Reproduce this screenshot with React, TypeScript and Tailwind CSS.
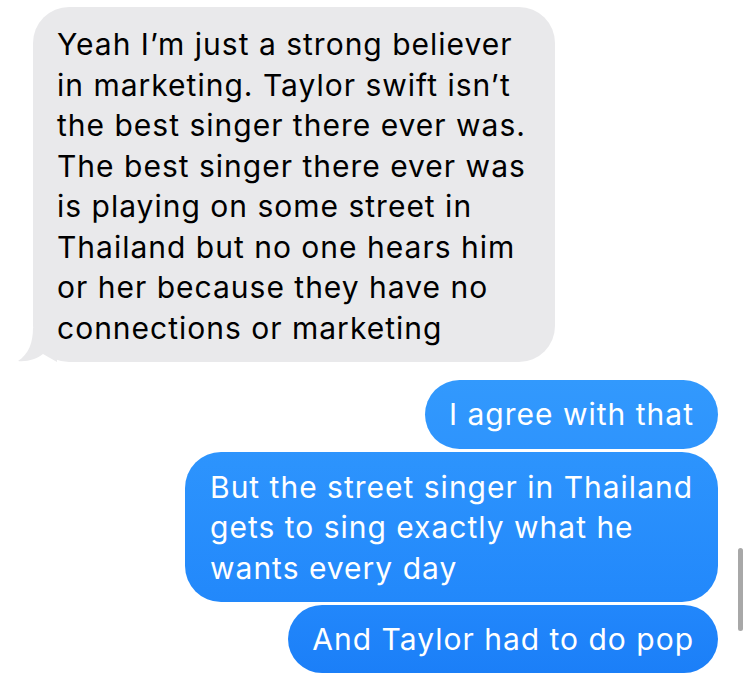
const grayLines = [
  'Yeah I’m just a strong believer',
  'in marketing. Taylor swift isn’t',
  'the best singer there ever was.',
  'The best singer there ever was',
  'is playing on some street in',
  'Thailand but no one hears him',
  'or her because they have no',
  'connections or marketing',
];

const streetLines = ['But the street singer in Thailand', 'gets to sing exactly what he', 'wants every day'];

export default function App() {
  return (
    <div className="relative w-[750px] h-[676px] bg-white overflow-hidden font-['Inter','Noto_Sans',sans-serif] text-[30px] leading-[40.5px] tracking-[1px]">
      <div className="flex flex-col pt-[7px]">
        {/* Received */}
        <div className="relative ml-[33px] w-[522px] rounded-[36px] bg-[#e9e9eb] pl-[24px] pt-[17px] pb-[14px] text-black">
          {grayLines.map((l, i) => (
            <div key={i} className="whitespace-nowrap">{l}</div>
          ))}
          <svg className="absolute left-[-16px] bottom-0" width="40" height="34" viewBox="0 0 40 34">
            <path d="M16 0 C16 14 12 26 1 33 C10 34 20 31 26 26 L40 34 L40 0 Z" fill="#e9e9eb" />
          </svg>
        </div>

        {/* Sent */}
        <div className="mt-[18px] mr-[32px] flex flex-col items-end gap-[3px] text-white">
          <div className="rounded-[35px] bg-gradient-to-b from-[#3299fd] to-[#2e94fd] pl-[24px] pr-[24px] pt-[14px] pb-[14px] whitespace-nowrap">
            I agree with that
          </div>
          <div className="w-[533px] rounded-[36px] bg-gradient-to-b from-[#2d94fd] to-[#2288fb] pl-[25px] pt-[15px] pb-[14px]">
            {streetLines.map((l, i) => (
              <div key={i} className="whitespace-nowrap">{l}</div>
            ))}
          </div>
          <div className="rounded-[35px] bg-gradient-to-b from-[#2287fb] to-[#1b7ff8] pl-[24px] pr-[24px] pt-[14px] pb-[13px] whitespace-nowrap">
            And Taylor had to do pop
          </div>
        </div>
      </div>

      {/* scroll indicator */}
      <div className="absolute left-[738px] top-[548px] w-[5px] h-[83px] rounded-full bg-[#a8a8a8]" />
    </div>
  );
}
